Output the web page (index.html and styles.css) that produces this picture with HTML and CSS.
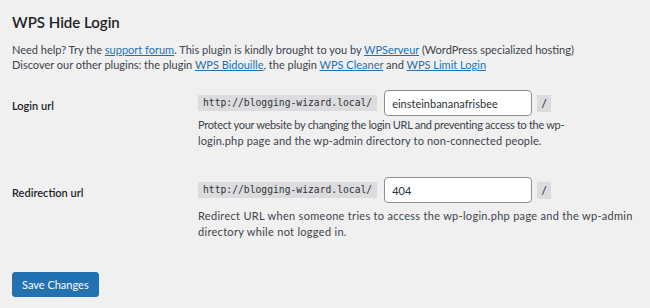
FILE: index.html
```html
<!DOCTYPE html>
<html>
<head>
<meta charset="utf-8">
<link rel="stylesheet" href="styles.css">
</head>
<body>
<div class="wrap">
  <h2 class="title">WPS Hide Login</h2>
  <p class="help">Need help? Try the <a href="#">support forum</a>. This plugin is kindly brought to you by <a href="#">WPServeur</a> (WordPress specialized hosting)<br>Discover our other plugins: the plugin <a href="#">WPS Bidouille</a>, the plugin <a href="#">WPS Cleaner</a> and <a href="#">WPS Limit Login</a></p>
  <div class="form-table">
    <div class="row">
      <div class="label">Login url</div>
      <div class="field">
        <div class="url-line">
          <code class="prefix">http://blogging-wizard.local/</code>
          <input class="text" type="text" value="einsteinbananafrisbee">
          <code class="slash">/</code>
        </div>
        <p class="description first"><span class="tight">Protect your website by changing the login URL and preventing access to the wp-</span>login.php page and the wp-admin directory to non-connected people.</p>
      </div>
    </div>
    <div class="row">
      <div class="label">Redirection url</div>
      <div class="field">
        <div class="url-line">
          <code class="prefix">http://blogging-wizard.local/</code>
          <input class="text" type="text" value="404">
          <code class="slash">/</code>
        </div>
        <p class="description second">Redirect URL when someone tries to access the wp-login.php page and the wp-admin directory while not logged in.</p>
      </div>
    </div>
  </div>
  <div class="submit"><button class="button-primary" type="button">Save Changes</button></div>
</div>
</body>
</html>
```
FILE: styles.css
```css
html, body {
  margin: 0;
  padding: 0;
  background: #f0f0f1;
}
body {
  font-family: Lato, "Noto Sans", sans-serif;
  font-size: 11px;
  color: #3c434a;
}
.wrap {
  padding: 0 12px;
}
.title {
  margin: 12px 0 0;
  font-size: 15px;
  line-height: 20px;
  font-weight: 600;
  color: #1d2327;
}
.help {
  margin: 10px 0 0;
  line-height: 15px;
  white-space: nowrap;
}
a {
  color: #2271b1;
  text-decoration: underline;
}
.form-table {
  margin-top: 4px;
}
.row {
  display: grid;
  grid-template-columns: 186px 1fr;
  padding: 14px 0;
}
.label {
  font-weight: 600;
  color: #1d2327;
  padding-top: 8px;
  line-height: 16px;
}
.url-line {
  display: flex;
  align-items: center;
}
code {
  font-family: "DejaVu Sans Mono", "Liberation Mono", monospace;
  background: #dcdcde;
  color: #2c3338;
  font-size: 9.7px;
  line-height: 16px;
  padding: 0 5px;
}
.prefix {
  margin-right: 7px;
}
.text {
  box-sizing: border-box;
  width: 148px;
  height: 26px;
  margin: 0 5px 0 0;
  padding: 0 7px;
  border: 1px solid #8c8f94;
  border-radius: 4px;
  background: #fff;
  font-family: inherit;
  font-size: 11px;
  color: #2c3338;
  outline: none;
}
.slash {
  padding: 1px 4px 0;
}
.description {
  margin: 1px 0 0;
  line-height: 16px;
}
.description.first {
  max-width: 380px;
  letter-spacing: 0.15px;
}
.description .tight {
  letter-spacing: -0.3px;
}
.description.second {
  margin-top: 5px;
  max-width: 445px;
  letter-spacing: 0.3px;
}
.submit {
  margin-top: 18px;
}
.button-primary {
  box-sizing: border-box;
  height: 25px;
  padding: 0 9px;
  background: #2271b1;
  border: 1px solid #2271b1;
  border-radius: 3px;
  color: #fff;
  font-family: inherit;
  font-size: 11px;
  cursor: pointer;
}
```
